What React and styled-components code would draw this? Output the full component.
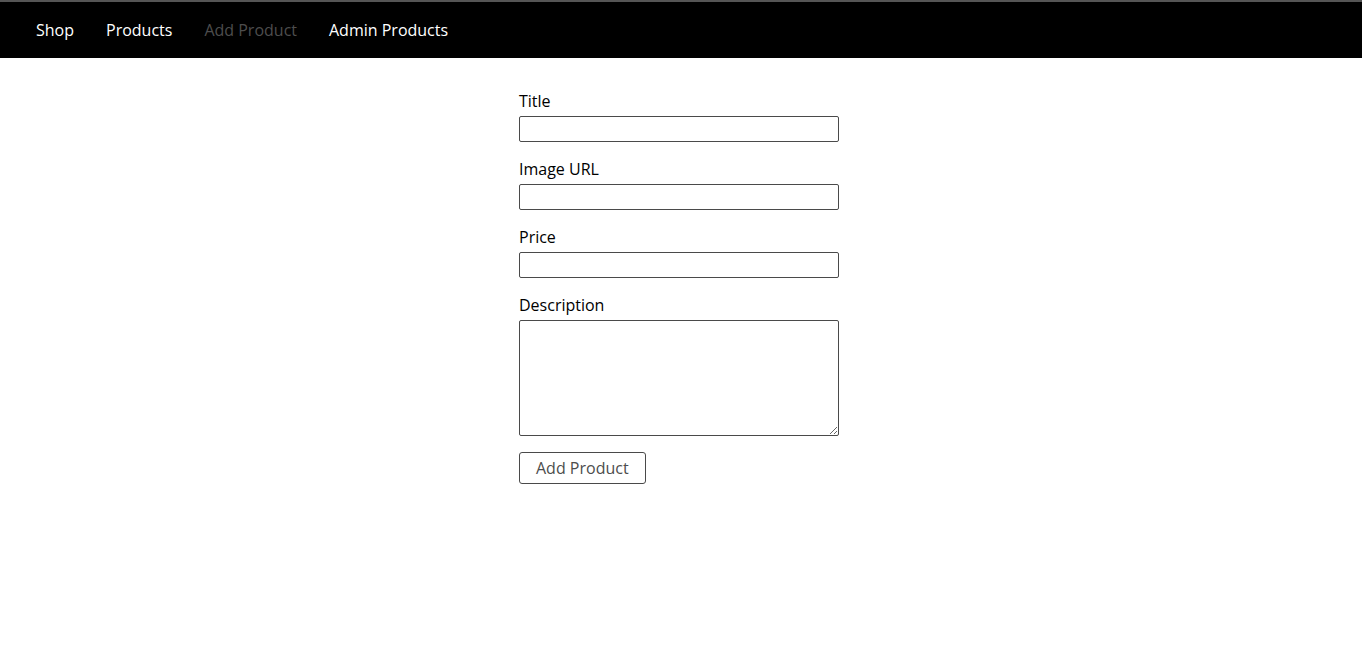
import React from "react";
import styled, { createGlobalStyle } from "styled-components";

const Global = createGlobalStyle`
  * { box-sizing: border-box; }
  html, body { margin: 0; padding: 0; background: #fff; }
  body { font-family: "Open Sans", "Liberation Sans", sans-serif; }
`;

const Header = styled.header`
  height: 58px;
  background: #000;
  border-top: 2px solid #555;
  display: flex;
  align-items: center;
  padding: 0 0 0 36px;
`;

const Nav = styled.ul`
  list-style: none;
  margin: 0;
  padding: 0;
  display: flex;
  gap: 32px;
`;

const NavLink = styled.a`
  font-size: 16px;
  line-height: 22px;
  text-decoration: none;
  color: ${(p) => (p.$active ? "#4d4d4d" : "#fff")};
  cursor: pointer;
`;

const Main = styled.main`
  padding: 16px 0;
`;

const Form = styled.form`
  width: 324px;
  margin: 0 auto;
`;

const Field = styled.div`
  margin: 16px 0;
  display: flex;
  flex-direction: column;
  align-items: flex-start;
`;

const Label = styled.label`
  display: block;
  font-size: 16px;
  line-height: 22px;
  color: #000;
  margin-bottom: 4px;
`;

const Input = styled.input`
  width: 320px;
  height: 26px;
  border: 1px solid #4a4a4a;
  border-radius: 2px;
  font: inherit;
  font-size: 16px;
  padding: 1px 4px;
  background: #fff;
`;

const TextArea = styled.textarea`
  width: 320px;
  height: 116px;
  border: 1px solid #4a4a4a;
  border-radius: 2px;
  font: inherit;
  font-size: 16px;
  padding: 2px 4px;
  display: block;
`;

const Button = styled.button`
  font: inherit;
  font-size: 16px;
  line-height: 22px;
  color: #4d4d4d;
  background: #fff;
  border: 1px solid #4a4a4a;
  border-radius: 3px;
  padding: 4px 16px;
  cursor: pointer;
`;

const links = [
  { label: "Shop" },
  { label: "Products" },
  { label: "Add Product", active: true },
  { label: "Admin Products" },
];

export default function App() {
  return (
    <>
      <Global />
      <Header>
        <nav>
          <Nav>
            {links.map((l) => (
              <li key={l.label}>
                <NavLink $active={l.active}>{l.label}</NavLink>
              </li>
            ))}
          </Nav>
        </nav>
      </Header>
      <Main>
        <Form onSubmit={(e) => e.preventDefault()}>
          <Field>
            <Label htmlFor="title">Title</Label>
            <Input id="title" type="text" />
          </Field>
          <Field>
            <Label htmlFor="imageUrl">Image URL</Label>
            <Input id="imageUrl" type="text" />
          </Field>
          <Field>
            <Label htmlFor="price">Price</Label>
            <Input id="price" type="number" step="0.01" />
          </Field>
          <Field>
            <Label htmlFor="description">Description</Label>
            <TextArea id="description" rows={5} />
          </Field>
          <Button type="submit">Add Product</Button>
        </Form>
      </Main>
    </>
  );
}
